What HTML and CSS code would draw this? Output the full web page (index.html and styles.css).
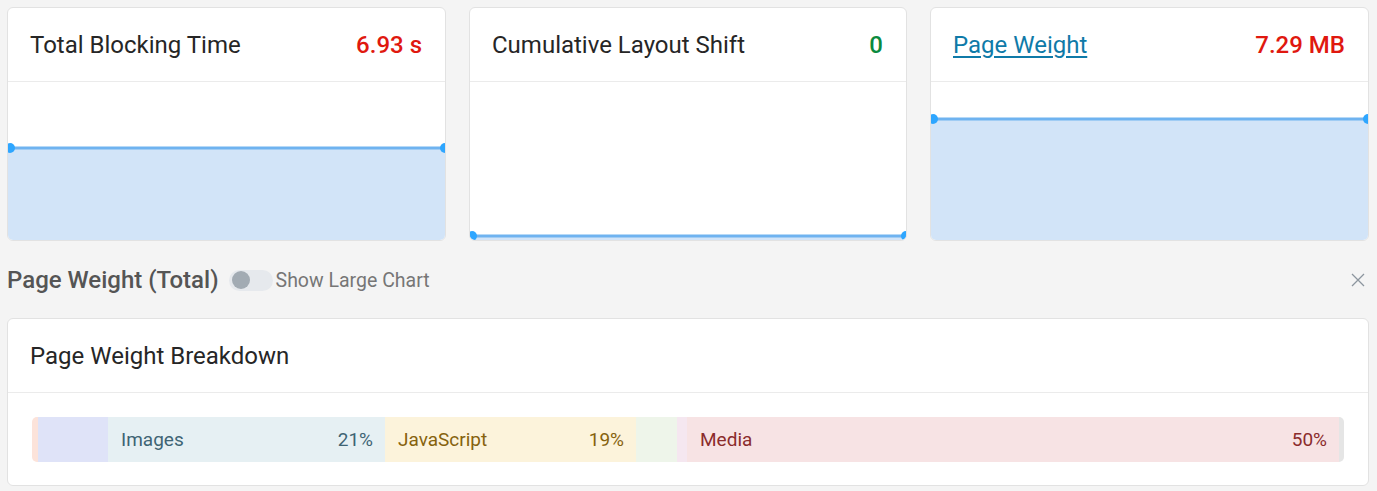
FILE: index.html
```html
<!DOCTYPE html>
<html>
<head>
<meta charset="utf-8">
<link rel="stylesheet" href="styles.css">
</head>
<body>
<div class="page">
  <div class="metrics">
    <div class="card">
      <div class="card-head">
        <span class="title">Total Blocking Time</span>
        <span class="value bad">6.93 s</span>
      </div>
      <div class="chart">
        <svg viewBox="0 0 437 159" width="437" height="159">
          <rect x="0" y="66" width="437" height="93" fill="#d2e4f8"/>
          <line x1="0" y1="66" x2="437" y2="66" stroke="#6fb3f0" stroke-width="3"/>
          <circle cx="2" cy="66" r="5" fill="#2ea6ff"/>
          <circle cx="437" cy="66" r="5" fill="#2ea6ff"/>
        </svg>
      </div>
    </div>
    <div class="card">
      <div class="card-head">
        <span class="title">Cumulative Layout Shift</span>
        <span class="value good">0</span>
      </div>
      <div class="chart">
        <svg viewBox="0 0 437 159" width="437" height="159">
          <rect x="0" y="154" width="437" height="5" fill="#d2e4f8"/>
          <line x1="0" y1="154" x2="437" y2="154" stroke="#6fb3f0" stroke-width="3"/>
          <circle cx="2" cy="154" r="5" fill="#2ea6ff"/>
          <circle cx="436" cy="154" r="5" fill="#2ea6ff"/>
        </svg>
      </div>
    </div>
    <div class="card">
      <div class="card-head">
        <a class="title link" href="#">Page Weight</a>
        <span class="value bad">7.29 MB</span>
      </div>
      <div class="chart">
        <svg viewBox="0 0 437 159" width="437" height="159">
          <rect x="0" y="37" width="437" height="122" fill="#d2e4f8"/>
          <line x1="0" y1="37" x2="437" y2="37" stroke="#6fb3f0" stroke-width="3"/>
          <circle cx="2" cy="37" r="5" fill="#2ea6ff"/>
          <circle cx="437" cy="37" r="5" fill="#2ea6ff"/>
        </svg>
      </div>
    </div>
  </div>

  <div class="section-row">
    <div class="section-left">
      <span class="section-title">Page Weight (Total)</span>
      <span class="toggle"><span class="knob"></span></span>
      <span class="toggle-label">Show Large Chart</span>
    </div>
    <svg class="close" viewBox="0 0 14 14" width="14" height="14">
      <path d="M1 1 L13 13 M13 1 L1 13" stroke="#8c959e" stroke-width="1.3" fill="none"/>
    </svg>
  </div>

  <div class="card wide">
    <div class="card-head">
      <span class="title">Page Weight Breakdown</span>
    </div>
    <div class="breakdown">
      <div class="bar">
        <div class="seg s-html" style="width:6px"></div>
        <div class="seg s-css" style="width:70px"></div>
        <div class="seg s-img" style="width:277px"><span>Images</span><span>21%</span></div>
        <div class="seg s-js" style="width:251px"><span>JavaScript</span><span>19%</span></div>
        <div class="seg s-font" style="width:41px"></div>
        <div class="seg s-other" style="width:10px"></div>
        <div class="seg s-media" style="width:652px"><span>Media</span><span>50%</span></div>
        <div class="seg s-rest" style="width:5px"></div>
      </div>
    </div>
  </div>
</div>
</body>
</html>
```

FILE: styles.css
```css
html, body {
  margin: 0;
  padding: 0;
  background: #f4f4f4;
  font-family: Roboto, "Liberation Sans", Arial, sans-serif;
}

.page {
  padding: 7px 8px 0 7px;
}

.metrics {
  display: grid;
  grid-template-columns: 439px 438px 439px;
  column-gap: 23px;
}

.card {
  background: #fff;
  border: 1px solid #e2e2e2;
  border-radius: 6px;
  overflow: hidden;
  box-sizing: border-box;
}

.metrics .card {
  height: 234px;
  display: flex;
  flex-direction: column;
}

.card-head {
  height: 74px;
  flex: none;
  box-sizing: border-box;
  border-bottom: 1px solid #ebebeb;
  display: flex;
  align-items: center;
  justify-content: space-between;
  padding: 0 23px 0 22px;
}

.title {
  font-size: 24px;
  font-weight: 400;
  color: #262626;
}

.link {
  color: #0f7aa8;
  text-decoration: underline;
  text-underline-offset: 3px;
  text-decoration-thickness: 2px;
}

.value {
  font-size: 24px;
  font-weight: 500;
}

.bad { color: #e0180f; }
.good { color: #0b8a3e; }

.chart {
  flex: 1;
  position: relative;
}

.chart svg {
  display: block;
}

.section-row {
  display: flex;
  align-items: center;
  justify-content: space-between;
  height: 44px;
  margin: 17px 0 16px 0;
}

.section-left {
  display: flex;
  align-items: center;
}

.section-title {
  font-size: 24px;
  font-weight: 500;
  color: #555;
}

.toggle {
  width: 44px;
  height: 21px;
  border-radius: 11px;
  background: #e6e9ed;
  margin-left: 10px;
  display: flex;
  align-items: center;
  padding-left: 3px;
  box-sizing: border-box;
}

.knob {
  width: 18px;
  height: 18px;
  border-radius: 50%;
  background: #a2abb3;
}

.toggle-label {
  font-size: 19.5px;
  color: #767676;
  margin-left: 3px;
}

.close {
  margin-right: 4px;
}

.wide {
  height: 168px;
}

.breakdown {
  padding: 24px;
}

.bar {
  display: flex;
  height: 45px;
  border-radius: 5px;
  overflow: hidden;
}

.seg {
  height: 100%;
  flex: none;
  display: flex;
  align-items: center;
  justify-content: space-between;
  padding: 0 12px 0 13px;
  box-sizing: border-box;
  font-size: 19px;
}

.s-html { background: #fce3da; padding: 0; }
.s-css { background: #dfe3f8; padding: 0; }
.s-img { background: #e6f0f3; color: #3e6474; }
.s-js { background: #fcf3db; color: #86620e; }
.s-font { background: #eef5ea; padding: 0; }
.s-other { background: #f5e7f0; padding: 0; }
.s-media { background: #f7e3e4; color: #8b2c2c; }
.s-rest { background: #e5e5e5; padding: 0; }
```
